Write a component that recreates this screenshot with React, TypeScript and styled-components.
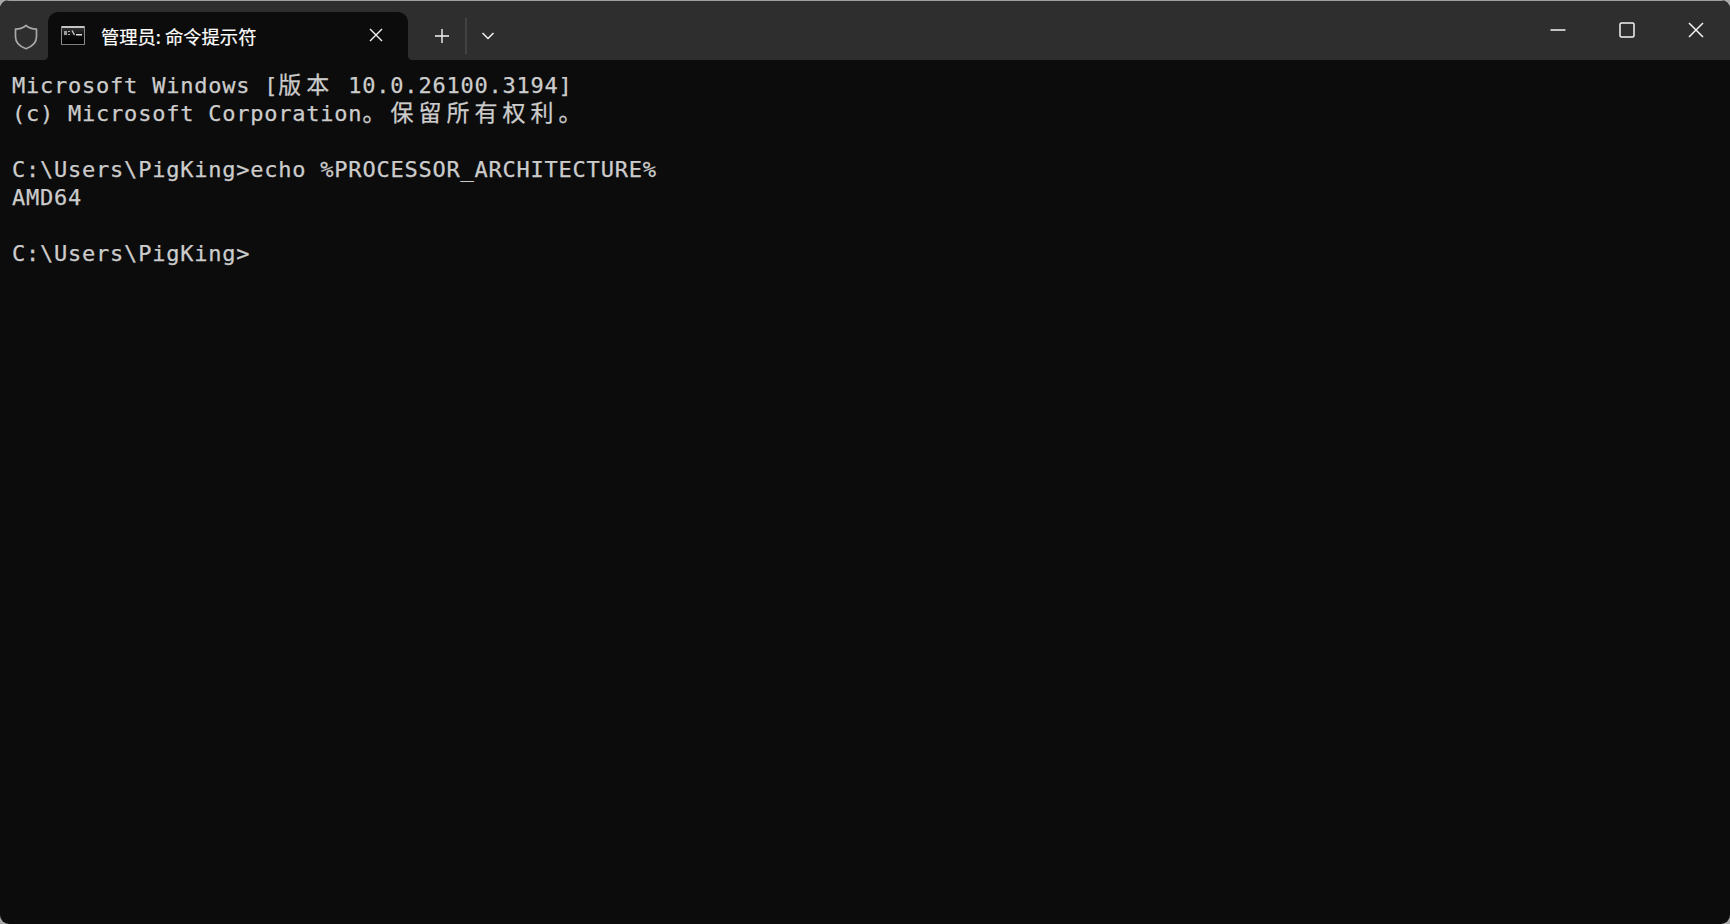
import React, { FC } from 'react';
import styled, { createGlobalStyle } from 'styled-components';

const GlobalStyle = createGlobalStyle`
    html, body {
        margin: 0;
        padding: 0;
        height: 100%;
        background: #a8a8a8;
        overflow: hidden;
    }
`;

const CJK = `'Noto Sans CJK SC', 'Liberation Sans', sans-serif`;

const TERMINAL_LINES = [
    ['Microsoft Windows [', { cjk: '版本' }, ' 10.0.26100.3194]'],
    ['(c) Microsoft Corporation', { cjk: '。保留所有权利。' }],
    [],
    ['C:\\Users\\PigKing>echo %PROCESSOR_ARCHITECTURE%'],
    ['AMD64'],
    [],
    ['C:\\Users\\PigKing>'],
] as (string | { cjk: string })[][];

const App: FC = () => (
    <>
        <GlobalStyle />
        <Window>
            <TitleBar>
                <ShieldSlot>
                    <svg width="24" height="26" viewBox="0 0 24 26" fill="none">
                        <path
                            d="M12 1.5c2.600 2.200 5.800 3.400 10.500 3.700v7.600c0 5.600-3.600 9.600-10.500 11.900C5.100 22.400 1.500 18.400 1.500 12.800V5.200C6.200 4.900 9.400 3.700 12 1.500z"
                            stroke="#a8a8a8"
                            strokeWidth="1.700"
                            strokeLinejoin="round"
                        />
                    </svg>
                </ShieldSlot>
                <Tab>
                    <TabIcon>
                        <svg width="24" height="19" viewBox="0 0 24 19">
                            <defs>
                                <linearGradient id="consoleBody" x1="0" y1="0" x2="0" y2="1">
                                    <stop offset="0" stopColor="#3a3a3a" />
                                    <stop offset="0.55" stopColor="#0a0a0a" />
                                    <stop offset="1" stopColor="#000000" />
                                </linearGradient>
                            </defs>
                            <rect width="24" height="19" fill="url(#consoleBody)" />
                            <rect width="24" height="2" fill="#c4c4c4" />
                            <rect width="1" height="19" fill="#8c8c8c" />
                            <rect x="23" width="1" height="19" fill="#8c8c8c" />
                            <rect y="18" width="24" height="1" fill="#808080" />
                            <rect x="3" y="5" width="3" height="4" fill="#9a9a9a" />
                            <rect x="7" y="5" width="2" height="1" fill="#b0b0b0" />
                            <rect x="7" y="8" width="2" height="1" fill="#b0b0b0" />
                            <path d="M11 4.500l2.500 4.500" stroke="#d0d0d0" strokeWidth="1.300" />
                            <rect x="15" y="8" width="6" height="1.500" fill="#dcdcdc" />
                        </svg>
                    </TabIcon>
                    <TabTitle>管理员: 命令提示符</TabTitle>
                    <TabClose>
                        <svg width="14" height="14" viewBox="0 0 14 14" fill="none">
                            <path d="M1 1l12 12M13 1L1 13" stroke="#f4f4f4" strokeWidth="1.400" />
                        </svg>
                    </TabClose>
                </Tab>
                <NewTabButton>
                    <svg width="16" height="16" viewBox="0 0 16 16" fill="none">
                        <path d="M8 1v14M1 8h14" stroke="#f4f4f4" strokeWidth="1.400" />
                    </svg>
                </NewTabButton>
                <Divider />
                <DropdownButton>
                    <svg width="14" height="8" viewBox="0 0 14 8" fill="none">
                        <path d="M1.500 1l5.500 5.500L12.500 1" stroke="#f4f4f4" strokeWidth="1.500" />
                    </svg>
                </DropdownButton>
                <WindowControls>
                    <ControlButton>
                        <svg width="16" height="16" viewBox="0 0 16 16" fill="none">
                            <path d="M0.500 8h15" stroke="#f4f4f4" strokeWidth="1.500" />
                        </svg>
                    </ControlButton>
                    <ControlButton>
                        <svg width="16" height="16" viewBox="0 0 16 16" fill="none">
                            <rect x="1" y="1" width="14" height="14" rx="1.500" stroke="#f4f4f4" strokeWidth="1.500" />
                        </svg>
                    </ControlButton>
                    <ControlButton>
                        <svg width="16" height="16" viewBox="0 0 16 16" fill="none">
                            <path d="M1 1l14 14M15 1L1 15" stroke="#f4f4f4" strokeWidth="1.500" />
                        </svg>
                    </ControlButton>
                </WindowControls>
            </TitleBar>
            <Terminal>
                {TERMINAL_LINES.map((line, i) => (
                    <Line key={i}>
                        {line.map((part, j) =>
                            typeof part === 'string' ? (
                                <span key={j}>{part}</span>
                            ) : (
                                <Wide key={j}>{part.cjk}</Wide>
                            ),
                        )}
                    </Line>
                ))}
            </Terminal>
        </Window>
    </>
);

export default App;

const Window = styled.div`
    width: 1730px;
    height: 924px;
    display: flex;
    flex-direction: column;
    border-radius: 9px;
    overflow: hidden;
    background: #0c0c0c;
`;

const TitleBar = styled.div`
    height: 60px;
    flex-shrink: 0;
    box-sizing: border-box;
    border-top: 1px solid #a0a0a0;
    background: #2e2e2e;
    display: flex;
    align-items: flex-end;
`;

const ShieldSlot = styled.div`
    width: 48px;
    height: 59px;
    display: flex;
    align-items: center;
    justify-content: center;
    padding: 12px 0 0 4px;
    box-sizing: border-box;
`;

const Tab = styled.div`
    width: 360px;
    height: 48px;
    background: #0c0c0c;
    border-radius: 10px 10px 0 0;
    display: flex;
    align-items: center;
    position: relative;
    &::before,
    &::after {
        content: '';
        position: absolute;
        bottom: 0;
        width: 5px;
        height: 5px;
    }
    &::before {
        left: -5px;
        background: radial-gradient(circle at 0 0, transparent 5px, #0c0c0c 5.500px);
    }
    &::after {
        right: -5px;
        background: radial-gradient(circle at 100% 0, transparent 5px, #0c0c0c 5.500px);
    }
`;

const TabIcon = styled.div`
    width: 24px;
    height: 19px;
    margin-left: 13px;
    margin-top: -2px;
    display: flex;
`;

const TabTitle = styled.div`
    margin-left: 16px;
    flex: 1;
    font-family: ${CJK};
    font-size: 18.3px;
    color: #ffffff;
    white-space: nowrap;
    -webkit-text-stroke: 0.2px #ffffff;
`;

const TabClose = styled.div`
    width: 14px;
    height: 14px;
    margin-right: 25px;
    margin-top: -2px;
    display: flex;
`;

const NewTabButton = styled.div`
    width: 57px;
    height: 48px;
    box-sizing: border-box;
    padding-left: 10px;
    display: flex;
    align-items: center;
    justify-content: center;
`;

const Divider = styled.div`
    width: 2px;
    height: 36px;
    background: #424242;
    margin-bottom: 6px;
`;

const DropdownButton = styled.div`
    width: 41px;
    height: 48px;
    display: flex;
    align-items: center;
    justify-content: center;
`;

const WindowControls = styled.div`
    margin-left: auto;
    height: 57px;
    align-self: flex-start;
    display: flex;
`;

const ControlButton = styled.div`
    width: 69px;
    height: 57px;
    display: flex;
    align-items: center;
    justify-content: center;
`;

const Terminal = styled.div`
    flex: 1;
    padding: 12px 12px 0;
    font-family: 'DejaVu Sans Mono', 'Noto Sans CJK SC', monospace;
    font-size: 22px;
    letter-spacing: 0.77px;
    line-height: 28px;
    color: #cccccc;
    -webkit-text-stroke: 0.25px #cccccc;
`;

const Line = styled.div`
    height: 28px;
    white-space: pre;
`;

const Wide = styled.span`
    font-family: 'Noto Sans CJK SC', sans-serif;
    font-size: 23px;
    letter-spacing: 5px;
    line-height: 1;
`;
